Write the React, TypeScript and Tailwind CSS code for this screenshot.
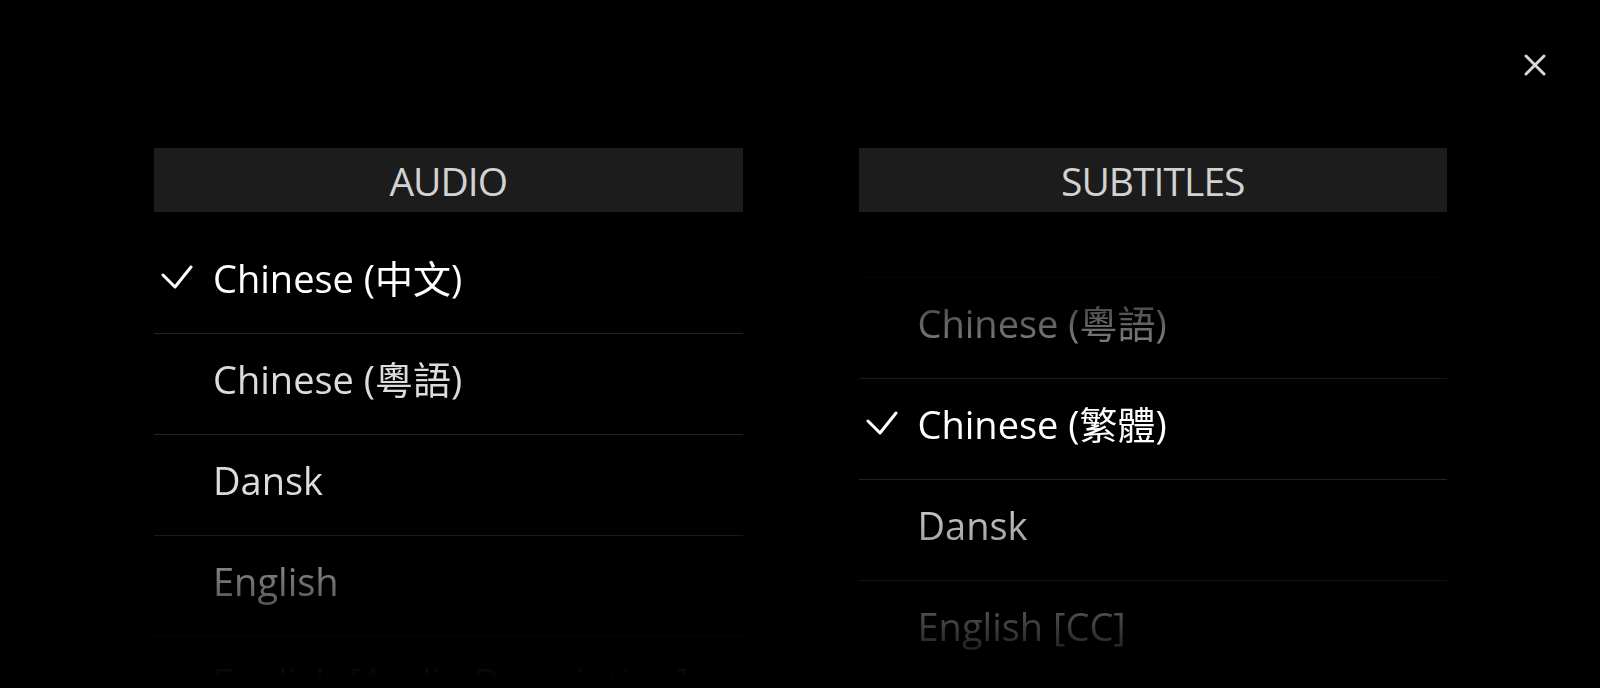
import React from 'react';

type Track = { label: string; selected?: boolean };

const audioTracks: Track[] = [
  { label: 'Chinese (中文)', selected: true },
  { label: 'Chinese (粵語)' },
  { label: 'Dansk' },
  { label: 'English' },
  { label: 'English [Audio Description]' },
];

const subtitleTracks: Track[] = [
  { label: 'Off' },
  { label: 'Chinese (粵語)' },
  { label: 'Chinese (繁體)', selected: true },
  { label: 'Dansk' },
  { label: 'English [CC]' },
  { label: 'English' },
];

function Check() {
  return (
    <svg width="32" height="26" viewBox="0 0 32 26" fill="none" className="shrink-0">
      <polyline points="2,10 14,22 30,2" stroke="white" strokeWidth="3" strokeLinecap="round" strokeLinejoin="round" />
    </svg>
  );
}

function TrackColumn({ title, tracks, scrolled }: { title: string; tracks: Track[]; scrolled?: boolean }) {
  return (
    <div className="flex-1 flex flex-col">
      <div className="h-16 bg-[#1c1c1c] flex items-center justify-center pt-[3px] text-[39px] text-[#d2d2d2] tracking-tight">
        {title}
      </div>
      <div
        className={`h-[476px] overflow-hidden ${
          scrolled
            ? '[mask-image:linear-gradient(to_bottom,transparent_40px,black_200px,black_280px,transparent_466px)]'
            : '[mask-image:linear-gradient(to_bottom,black_0px,black_280px,transparent_466px)]'
        }`}
      >
        <div className={scrolled ? '-mt-[35px]' : 'pt-[21px]'}>
          {tracks.map(t => (
            <div key={t.label} className="h-[101px] border-b border-[#212121] flex items-center pb-[11px]">
              <div className="w-[59px] pl-[7px] flex items-center">
                {t.selected && <Check />}
              </div>
              <span className={`text-[38px] leading-none whitespace-nowrap ${t.selected ? 'text-white' : 'text-[#dcdcdc]'}`}>
                {t.label}
              </span>
            </div>
          ))}
        </div>
      </div>
    </div>
  );
}

export default function App() {
  return (
    <div
      className="relative h-[688px] w-full bg-black overflow-hidden"
      style={{ fontFamily: '"Open Sans", "Noto Sans CJK TC", sans-serif' }}
    >
      <button className="absolute left-[1524px] top-[54px] w-[22px] h-[22px] flex items-center justify-center">
        <svg width="22" height="22" viewBox="0 0 22 22" fill="none">
          <path d="M2 2 L20 20 M20 2 L2 20" stroke="#d8d8d8" strokeWidth="3" strokeLinecap="round" />
        </svg>
      </button>
      <div className="flex gap-[116px] pl-[154px] pr-[153px] pt-[148px]">
        <TrackColumn title="AUDIO" tracks={audioTracks} />
        <TrackColumn title="SUBTITLES" tracks={subtitleTracks} scrolled />
      </div>
    </div>
  );
}
